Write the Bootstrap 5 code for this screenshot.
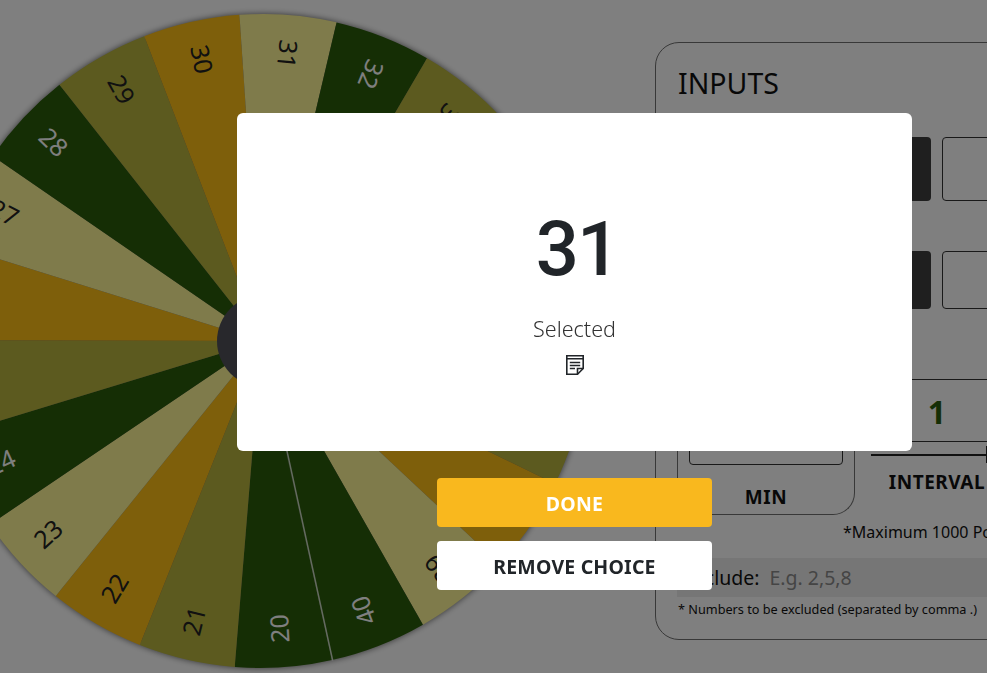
<!DOCTYPE html>
<html lang="en">
<head>
<meta charset="utf-8">
<title>Spin the wheel</title>
<link href="https://cdn.jsdelivr.net/npm/bootstrap@5.3.0/dist/css/bootstrap.min.css" rel="stylesheet">
<style>
html,body{height:100%;overflow:hidden;}
body{font-family:"Noto Sans","Open Sans",sans-serif;color:#212529;background:#fff;}
.page-wrap{width:987px;height:673px;overflow:hidden;}
.wheel-area{flex:0 0 655px;width:655px;height:673px;}
.wheel-area svg{display:block;overflow:hidden;}
.wheel-disc{filter:drop-shadow(0 0 3px rgba(0,0,0,.6));}
.w-green{fill:#2a5c0a;}.w-olive{fill:#b8b43e;}.w-gold{fill:#fdbe16;}.w-tan{fill:#fff696;}
.wheel-num{font-family:"Noto Sans",sans-serif;font-size:25px;text-anchor:middle;dominant-baseline:central;fill:#222;}
.wheel-num.on-green{fill:#fff;}
.inputs-panel{flex:0 0 460px;width:460px;height:598px;margin-top:42px;border:1px solid #707070;border-radius:24px;padding:22px 21px 0 21px;color:#111;}
.inputs-title{font-size:28.5px;line-height:36px;margin:0 0 0 1px;font-weight:400;}
.inputs-label{font-size:16px;line-height:20px;margin:8px 0 8px 1px;}
.opt-row{display:flex;gap:11px;}
.opt-one{height:64px;margin-bottom:50px;}
.opt-two{height:58px;margin-bottom:70px;}
.opt-dark{flex:0 0 254px;background:#3e3e3e;border-radius:4px;}
.opt-light{flex:0 0 150px;border:1px solid #333;border-radius:4px;}
.range-row{display:flex;gap:16px;align-items:flex-start;}
.min-group{flex:0 0 178px;height:136px;border:1px solid #707070;border-top:0;border-radius:0 0 22px 22px;padding:0 11px;text-align:center;}
.min-box{height:86px;border:1px solid #333;border-radius:4px;}
.range-name{font-size:19px;font-weight:700;line-height:24px;letter-spacing:.5px;}
.min-name{margin-top:20px;}
.int-group{flex:0 0 132px;text-align:center;}
.int-box{height:63px;border-top:1px solid #333;border-bottom:1px solid #333;font-size:32px;font-weight:700;line-height:63px;color:#2a5c0a;}
.int-slider{height:2px;background:#222;margin:12px 0 0;position:relative;}
.int-thumb{position:absolute;left:115px;top:-8px;width:3px;height:17px;background:#222;}
.int-name{margin-top:14px;}
.max-note{font-size:16px;line-height:22px;margin:6px 0 0 166px;white-space:nowrap;}
.exclude-row{height:39px;margin-top:15px;background-color:rgba(0,0,0,.07);display:flex;align-items:center;gap:10px;font-size:19.5px;padding-left:7px;width:420px;}
.exclude-row span+span{color:#8a8a8a;}
.exclude-note{font-size:12.7px;line-height:20px;margin:2px 0 0 1px;white-space:nowrap;}
.result-layer{z-index:1055;}
.result-box{width:675px;height:338px;margin:113px 0 0 237px;border:0;border-radius:6px;background:#fff;text-align:center;padding-top:86px;}
.result-num{font-family:Roboto,"Noto Sans",sans-serif;font-size:76px;line-height:100px;font-weight:500;letter-spacing:-2px;padding-left:5px;margin:0;color:#212529;}
.result-sub{font-size:21.5px;line-height:28px;margin:16px 0 0;font-weight:300;color:#333;}
.result-icon{display:block;margin:12px auto 0;}
.result-actions{width:275px;margin:27px 0 0 437px;display:flex;flex-direction:column;gap:14px;}
.act-btn{height:49px;border:0;border-radius:4px;font-size:19.5px;font-weight:700;padding:3px 0 0;letter-spacing:.2px;}
.act-done{background:#f9b81e;color:#fff;}
.act-remove{background:#fff;color:#212529;}
</style>
</head>
<body>
<div class="page-wrap d-flex">
  <div class="wheel-area">
    <svg width="655" height="673" viewBox="-263 -341 655 673" xmlns="http://www.w3.org/2000/svg" aria-label="Number wheel">
      <defs><path id="wedge" d="M0 0L0-327A327 327 0 0 1 96.4-312.5Z"/></defs>
      <g class="wheel-disc">
       <g transform="translate(-1.5 0) skewX(-.26) rotate(-.4)">
        <use href="#wedge" class="w-green" transform="rotate(167.7)"/>
        <use href="#wedge" class="w-olive" transform="rotate(184.84)"/>
        <use href="#wedge" class="w-gold" transform="rotate(201.99)"/>
        <use href="#wedge" class="w-tan" transform="rotate(219.13)"/>
        <use href="#wedge" class="w-green" transform="rotate(236.27)"/>
        <use href="#wedge" class="w-olive" transform="rotate(253.41)"/>
        <use href="#wedge" class="w-gold" transform="rotate(270.56)"/>
        <use href="#wedge" class="w-tan" transform="rotate(287.7)"/>
        <use href="#wedge" class="w-green" transform="rotate(304.84)"/>
        <use href="#wedge" class="w-olive" transform="rotate(321.99)"/>
        <use href="#wedge" class="w-gold" transform="rotate(339.13)"/>
        <use href="#wedge" class="w-tan" transform="rotate(356.27)"/>
        <use href="#wedge" class="w-green" transform="rotate(13.41)"/>
        <use href="#wedge" class="w-olive" transform="rotate(30.56)"/>
        <use href="#wedge" class="w-gold" transform="rotate(47.7)"/>
        <use href="#wedge" class="w-tan" transform="rotate(64.84)"/>
        <use href="#wedge" class="w-green" transform="rotate(81.99)"/>
        <use href="#wedge" class="w-olive" transform="rotate(99.13)"/>
        <use href="#wedge" class="w-gold" transform="rotate(116.27)"/>
        <use href="#wedge" class="w-tan" transform="rotate(133.41)"/>
        <use href="#wedge" class="w-green" transform="rotate(150.56)"/>
       </g>
      </g>
      <line x1="0" y1="0" x2="0" y2="-327" stroke="#fff" stroke-opacity=".75" stroke-width="1.5" transform="rotate(167.7)"/>
      <g transform="translate(-1 0) rotate(.4)">
        <text class="wheel-num on-green" transform="rotate(176.27) translate(0 -288) rotate(90)">20</text>
        <text class="wheel-num" transform="rotate(193.41) translate(0 -288) rotate(90)">21</text>
        <text class="wheel-num" transform="rotate(210.56) translate(0 -288) rotate(90)">22</text>
        <text class="wheel-num" transform="rotate(227.7) translate(0 -288) rotate(90)">23</text>
        <text class="wheel-num on-green" transform="rotate(244.84) translate(0 -288) rotate(90)">24</text>
        <text class="wheel-num" transform="rotate(261.99) translate(0 -288) rotate(90)">25</text>
        <text class="wheel-num" transform="rotate(279.13) translate(0 -288) rotate(90)">26</text>
        <text class="wheel-num" transform="rotate(296.27) translate(0 -288) rotate(90)">27</text>
        <text class="wheel-num on-green" transform="rotate(313.41) translate(0 -288) rotate(90)">28</text>
        <text class="wheel-num" transform="rotate(330.56) translate(0 -288) rotate(90)">29</text>
        <text class="wheel-num" transform="rotate(347.7) translate(0 -288) rotate(90)">30</text>
        <text class="wheel-num" transform="rotate(4.84) translate(0 -288) rotate(90)">31</text>
        <text class="wheel-num on-green" transform="rotate(21.99) translate(0 -288) rotate(90)">32</text>
        <text class="wheel-num" transform="rotate(39.13) translate(0 -288) rotate(90)">33</text>
        <text class="wheel-num" transform="rotate(56.27) translate(0 -288) rotate(90)">34</text>
        <text class="wheel-num" transform="rotate(73.41) translate(0 -288) rotate(90)">35</text>
        <text class="wheel-num on-green" transform="rotate(90.56) translate(0 -288) rotate(90)">36</text>
        <text class="wheel-num" transform="rotate(107.7) translate(0 -288) rotate(90)">37</text>
        <text class="wheel-num" transform="rotate(124.84) translate(0 -288) rotate(90)">38</text>
        <text class="wheel-num" transform="rotate(141.99) translate(0 -288) rotate(90)">39</text>
        <text class="wheel-num on-green" transform="rotate(159.13) translate(0 -288) rotate(90)">40</text>
      </g>
      <circle r="46" fill="#505058"/>
    </svg>
  </div>
  <section class="inputs-panel">
    <h2 class="inputs-title">INPUTS</h2>
    <p class="inputs-label">Number</p>
    <div class="opt-row opt-one"><div class="opt-dark"></div><div class="opt-light"></div></div>
    <div class="opt-row opt-two"><div class="opt-dark"></div><div class="opt-light"></div></div>
    <div class="range-row">
      <div class="min-group"><div class="min-box"></div><div class="range-name min-name">MIN</div></div>
      <div class="int-group">
        <div class="int-box">1</div>
        <div class="int-slider"><div class="int-thumb"></div></div>
        <div class="range-name int-name">INTERVAL</div>
      </div>
    </div>
    <p class="max-note">*Maximum 1000 Points</p>
    <div class="exclude-row"><span>Exclude:</span><span>E.g. 2,5,8</span></div>
    <p class="exclude-note">* Numbers to be excluded (separated by comma .)</p>
  </section>
</div>
<div class="modal-backdrop fade show"></div>
<div class="modal d-block result-layer" tabindex="-1">
  <div class="modal-content result-box">
    <p class="result-num">31</p>
    <p class="result-sub">Selected</p>
    <svg class="result-icon" width="18" height="20" viewBox="0 0 18 20" fill="none" stroke="#212529" stroke-width="1.6" xmlns="http://www.w3.org/2000/svg" aria-label="Notes">
      <path d="M.8.8H17.2V13.5L11.5 19.2H.8Z"/>
      <path d="M11.5 19.2V13.5H17.2" />
      <path d="M.8 3.8H17.2M3.8 7.5H14.2M3.8 10.5H14.2M3.8 13.5H9"/>
    </svg>
  </div>
  <div class="result-actions">
    <button type="button" class="btn act-btn act-done">DONE</button>
    <button type="button" class="btn act-btn act-remove">REMOVE CHOICE</button>
  </div>
</div>
<script src="https://cdn.jsdelivr.net/npm/bootstrap@5.3.0/dist/js/bootstrap.bundle.min.js"></script>
</body>
</html>
